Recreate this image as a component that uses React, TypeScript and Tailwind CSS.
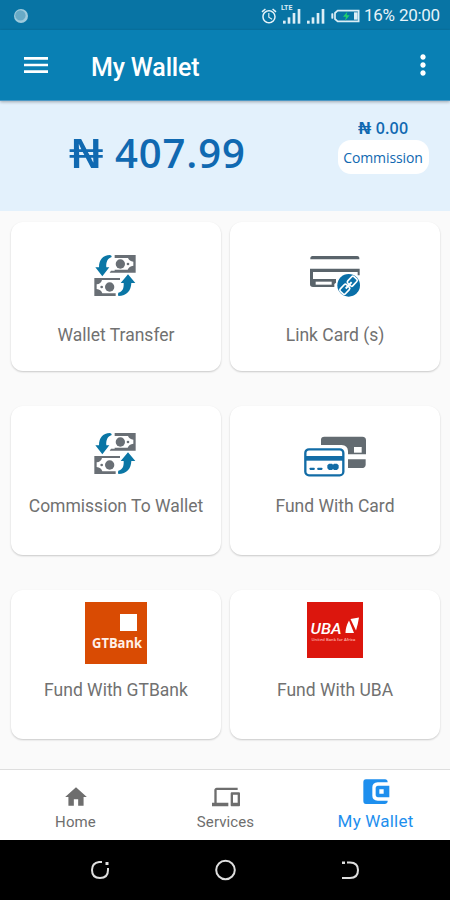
import type { ReactNode } from 'react';
import { MdAlarm, MdDevices, MdHome, MdMenu, MdMoreVert } from 'react-icons/md';

function SignalBars({ lte = false }: { lte?: boolean }) {
  return (
    <svg width="20" height="22" viewBox="0 0 60 66" className="fill-[#dceef6]">
      {lte && (
        <text x="0" y="18" fontSize="19" fontWeight="700" fontFamily="Roboto, sans-serif" textLength="34" lengthAdjust="spacingAndGlyphs">
          LTE
        </text>
      )}
      <rect x="6" y="50" width="8" height="9" />
      <rect x="20" y="40" width="8" height="19" />
      <rect x="35" y="27" width="8" height="32" />
      <rect x="50" y="15" width="8" height="44" />
    </svg>
  );
}

function Battery() {
  return (
    <svg width="29" height="14" viewBox="0 0 87 42">
      <rect x="1" y="13" width="6" height="16" rx="2" fill="#dceef6" />
      <path d="M20 5H83V37H20L12 30V12Z" fill="none" stroke="#dceef6" strokeWidth="5" />
      <rect x="69" y="10" width="11" height="22" fill="#dceef6" />
      <path d="M49 8L36 23H45L42 35L56 19H47Z" fill="#21d36b" />
    </svg>
  );
}

function StatusBar() {
  return (
    <div className="flex h-[30px] items-center bg-[#0874a4] pl-[14px] pr-[10px]">
      <svg width="14" height="14" viewBox="0 0 14 14" className="mt-[2px]">
        <circle cx="7" cy="7" r="7" fill="#9fcbdd" />
        <circle cx="6.4" cy="6.4" r="5.2" fill="#68aac6" />
      </svg>
      <div className="ml-auto flex h-full items-center pt-[2px] text-[#e6f3f9]">
        <MdAlarm className="size-[18px]" />
        <div className="ml-[3px] flex gap-[4px] pb-[2px]">
          <SignalBars lte />
          <SignalBars />
        </div>
        <div className="ml-[6px]">
          <Battery />
        </div>
        <span className="ml-[4px] w-[31px] whitespace-nowrap text-[17px] tracking-[-0.3px]">16%</span>
        <span className="ml-[4px] w-[41px] whitespace-nowrap text-[17px] tracking-[-0.3px]">20:00</span>
      </div>
    </div>
  );
}

function AppBar() {
  return (
    <header className="relative z-10 flex h-[71px] items-center border-b border-[#4c98c4] bg-[#0980b4] pl-[20px] text-white shadow-[0_1px_3px_rgba(0,0,0,0.3)]">
      <MdMenu className="size-[32px]" />
      <h1 className="ml-[39px] pt-[5px] text-[25px] font-medium tracking-[-0.15px]">My Wallet</h1>
      <MdMoreVert className="ml-auto mr-[11px] size-[32px]" />
    </header>
  );
}

function TransferIcon() {
  return (
    <svg width="44" height="44" viewBox="0 0 132 132">
      <path d="M65 6H128V59H50L54 53H65V50H104Q108 39 121 38V26Q109 25 105 15H65Z" fill="#696f75" />
      <circle cx="82" cy="33" r="14" fill="#696f75" />
      <circle cx="105" cy="33" r="4" fill="#696f75" />
      <path d="M51 6Q57 7 56 12C43 17 39 27 40 43H49L28 70L7 43H18C18 20 29 7 51 6Z" fill="#0a76a5" />
      <path d="M4 75H81V81H27Q24 93 11 94V108Q24 109 28 121H68V129H4Z" fill="#696f75" />
      <circle cx="50" cy="102" r="14" fill="#696f75" />
      <circle cx="26" cy="102" r="4" fill="#696f75" />
      <path d="M76 129Q74 123 76 119C89 116 93 106 92 90H83L105 64L127 90H115C114 114 102 128 76 129Z" fill="#0a76a5" />
    </svg>
  );
}

function LinkCardIcon() {
  return (
    <svg width="52" height="44" viewBox="0 0 156 132">
      <path d="M4 16V11Q5 6 10 6H145Q150 6 151 11V16Z" fill="#5a646b" />
      <path d="M3 44H152V64H146V54H12V75H81V86L76 90V99H12Q3 99 3 91Z" fill="#5a646b" />
      <rect x="20" y="83" width="48" height="9" fill="white" />
      <circle cx="119" cy="94" r="38" fill="#fff" />
      <circle cx="119" cy="94" r="34" fill="#0a6fa8" />
      <g transform="rotate(-47 119 94)" fill="none" stroke="white" strokeWidth="5">
        <rect x="89" y="83" width="27" height="21" rx="5" />
        <rect x="122" y="83" width="27" height="21" rx="5" />
        <path d="M106 94H132" strokeWidth="6" />
      </g>
    </svg>
  );
}

function CardsIcon() {
  return (
    <svg width="64" height="42" viewBox="0 0 192 126">
      <path d="M54 30V14Q54 5 64 5H178Q189 5 189 16V58H135V48Q134 31 116 30Z" fill="#636b71" />
      <rect x="153" y="36" width="23" height="17" fill="white" />
      <path d="M135 73H188V89Q187 99 176 99H135Z" fill="#636b71" />
      <rect x="7" y="43" width="114" height="78" rx="11" fill="white" stroke="#126ca6" strokeWidth="7" />
      <rect x="6" y="63" width="116" height="14" fill="#126ca6" />
      <rect x="20" y="98" width="15" height="7" rx="2" fill="#126ca6" />
      <rect x="43" y="98" width="15" height="7" rx="2" fill="#126ca6" />
      <path d="M78 86H87L90 89L93 86H102L107 91V100L102 105H93L90 102L87 105H78L73 100V91Z" fill="#126ca6" />
    </svg>
  );
}

function GtBankLogo() {
  return (
    <svg width="62" height="62" viewBox="0 0 62 62">
      <rect width="62" height="62" fill="#d94b03" />
      <rect x="35" y="12" width="17" height="17" fill="white" />
      <text x="7" y="46" fontSize="13.5" fontWeight="700" fontFamily="'Open Sans', sans-serif" fill="#fff0e8" textLength="50" lengthAdjust="spacingAndGlyphs">
        GTBank
      </text>
    </svg>
  );
}

function UbaLogo() {
  return (
    <svg width="56" height="56" viewBox="0 0 56 56">
      <rect width="56" height="56" fill="#dc160d" />
      <text x="3.5" y="31.5" fontSize="14" fontWeight="500" fontStyle="italic" fontFamily="Roboto, sans-serif" fill="white" textLength="31" lengthAdjust="spacingAndGlyphs">
        UBA
      </text>
      <path d="M42 18.500L47 31H38.500Q38.500 25 42 18.500ZM43.500 17L52 15.500Q51 22 49 28.500Z" fill="white" />
      <text x="4.500" y="38.800" fontSize="4" fontWeight="600" fontFamily="'Open Sans', sans-serif" fill="#ffb5ad" textLength="44" lengthAdjust="spacingAndGlyphs">
        United Bank for Africa
      </text>
    </svg>
  );
}

function Tile({ icon, label, iconBox }: { icon: ReactNode; label: string; iconBox: string }) {
  return (
    <button className="flex h-[149px] flex-col items-center rounded-[12px] bg-white shadow-[0_1px_2px_rgba(0,0,0,0.2)]">
      <span className={`flex items-start ${iconBox}`}>{icon}</span>
      <span className="whitespace-nowrap text-[17.5px] leading-[24px] text-[#717171]">{label}</span>
    </button>
  );
}

function WalletNavIcon() {
  return (
    <svg width="28" height="27" viewBox="0 0 84 81">
      <path d="M12 4H70Q77 5 77 11V13H47Q31 14 31 28V53Q31 67 47 68H77V70Q76 78 68 78H12Q4 78 4 69V13Q4 4 12 4Z" fill="#1e8fee" />
      <path fillRule="evenodd" d="M47 23H82V58H47Q41 57 41 52V29Q41 24 47 23ZM52 34V47H65V34Z" fill="#1e8fee" />
    </svg>
  );
}

function BottomNav() {
  return (
    <nav className="grid h-[71px] grid-cols-3 border-t border-[#dedede] bg-white text-[#6e6e6e]">
      <div className="flex flex-col items-center pl-px pt-[14px]">
        <MdHome className="size-[26px]" />
        <span className="mt-[2px] text-[15px] leading-[21px] tracking-[0.1px]">Home</span>
      </div>
      <div className="flex flex-col items-center pl-px pt-[13px]">
        <MdDevices className="size-[28px]" />
        <span className="mt-[1px] text-[15px] leading-[21px] tracking-[0.1px]">Services</span>
      </div>
      <div className="flex flex-col items-center pl-px pt-[8px] text-[#1e8fee]">
        <WalletNavIcon />
        <span className="mt-[5px] text-[17px] leading-[22px] tracking-[0.2px]">My Wallet</span>
      </div>
    </nav>
  );
}

function SystemNav() {
  return (
    <div className="flex h-[60px] items-center justify-between bg-black pl-[90px] pr-[90px]">
      <svg width="20" height="20" viewBox="0 0 20 20" fill="none" stroke="#dedede" strokeWidth="2">
        <path d="M12 2H9Q2 3 2 10Q2 18 10 18Q18 18 18 10V8" />
        <rect x="15.500" y="2" width="3" height="3" fill="#dedede" stroke="none" />
      </svg>
      <svg width="22" height="22" viewBox="0 0 22 22" fill="none" stroke="#dedede" strokeWidth="2">
        <circle cx="11.500" cy="11" r="9.300" />
      </svg>
      <svg width="20" height="20" viewBox="0 0 20 20" fill="none" stroke="#dedede" strokeWidth="2">
        <path d="M7 2.500H10Q18 2.500 18 10Q18 18 10 18H2" />
        <rect x="2" y="1.500" width="3" height="2.500" fill="#dedede" stroke="none" />
      </svg>
    </div>
  );
}

export default function App() {
  return (
    <div className="flex h-[900px] w-[450px] flex-col overflow-hidden bg-[#fafafa] font-[Roboto,sans-serif]">
      <StatusBar />
      <AppBar />
      <section className="flex h-[110px] bg-[#e3f1fc] pl-[69px] font-['Open_Sans','Noto_Sans',sans-serif] font-semibold text-[#1069b1]">
        <div className="flex w-[268px] items-center gap-[11px] pb-[6px] text-[40px] leading-none">
          <span className="w-[35px]">
            <span className="inline-block origin-left scale-x-[1.5] font-medium">₦</span>
          </span>
          <span className="whitespace-nowrap tracking-[0.9px]">407.99</span>
        </div>
        <div className="flex w-[92px] flex-col items-center pt-[17px]">
          <div className="flex items-center gap-[4px] text-[16px] leading-[20px]">
            <span className="w-[14px]">
              <span className="inline-block origin-left scale-x-[1.45]">₦</span>
            </span>
            <span className="tracking-[0.2px]">0.00</span>
          </div>
          <button className="mt-[2px] flex h-[34px] w-[91px] items-center justify-center rounded-[13px] bg-white text-[14px] font-medium tracking-[-0.1px]">
            Commission
          </button>
        </div>
      </section>
      <main className="grid grow grid-cols-[210px_210px] content-start gap-x-[9px] gap-y-[35px] pl-[11px] pt-[11px]">
        <Tile icon={<TransferIcon />} label="Wallet Transfer" iconBox="h-[101px] pt-[31px] pr-[2px]" />
        <Tile icon={<LinkCardIcon />} label="Link Card (s)" iconBox="h-[101px] pt-[32px]" />
        <Tile icon={<TransferIcon />} label="Commission To Wallet" iconBox="h-[88px] pt-[25px] pr-[2px]" />
        <Tile icon={<CardsIcon />} label="Fund With Card" iconBox="h-[88px] pt-[29px]" />
        <Tile icon={<GtBankLogo />} label="Fund With GTBank" iconBox="h-[88px] pt-[12px]" />
        <Tile icon={<UbaLogo />} label="Fund With UBA" iconBox="h-[88px] pt-[12px]" />
      </main>
      <BottomNav />
      <SystemNav />
    </div>
  );
}
